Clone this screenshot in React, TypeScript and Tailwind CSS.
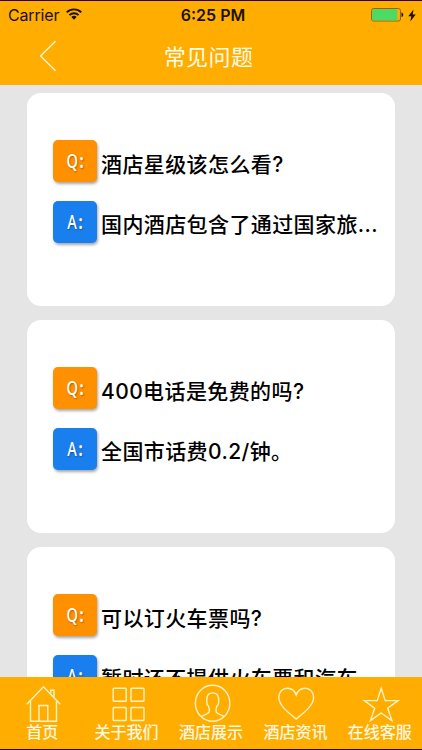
import React, { useState } from 'react';

type TabId = 'home' | 'about' | 'rooms' | 'news' | 'service';

interface Faq {
  question: string;
  answer: string;
}

const faqs: Faq[] = [
  { question: '酒店星级该怎么看?', answer: '国内酒店包含了通过国家旅...' },
  { question: '400电话是免费的吗?', answer: '全国市话费0.2/钟。' },
  { question: '可以订火车票吗?', answer: '暂时还不提供火车票和汽车' },
];

const HomeIcon = () => (
  <>
    <path d="M3.800 19.300 20.500 1.800l16.700 17.500" />
    <path d="M7.500 16v20.300h26V16" />
    <path d="M16 36.300V20.500h8.800v15.800" />
    <path d="M27.800 8.500V5.200h3.200v7" />
  </>
);

const GridIcon = () => (
  <>
    <rect x="5.200" y="3.300" width="13" height="13" rx="0.800" />
    <rect x="23" y="3.300" width="13" height="13" rx="0.800" />
    <rect x="5.200" y="22.500" width="13" height="13" rx="0.800" />
    <rect x="23" y="22.500" width="13" height="13" rx="0.800" />
  </>
);

const PersonIcon = () => (
  <>
    <ellipse cx="20.600" cy="18.200" rx="17.200" ry="18" />
    <path d="M9.300 31.700c2.500-2.200 6.900-2.400 7.900-4.700.6-1.800.1-4.200-.8-6.100-1.200-.7-1.700-1.900-1.600-3.700-.9-5.800 1.400-9.300 5.900-9.300s6.800 3.500 5.900 9.300c.1 1.800-.4 3-1.600 3.700-.9 1.900-1.400 4.300-.8 6.100 1 2.300 5.400 2.500 7.900 4.700" />
  </>
);

const HeartIcon = () => (
  <path d="M20.200 34C13.700 28.500 2.800 21 2.800 12.300 2.800 7 6.600 3.300 11.300 3.300c4 0 7.400 2.600 8.900 6.700 1.500-4.100 4.900-6.700 8.900-6.700 4.700 0 8.500 3.700 8.500 9 0 8.700-10.900 16.200-17.400 21.700Z" />
);

const StarIcon = () => (
  <path d="m20.200 3.300 4 12.300h12.900l-10.400 7.700 4.200 12.300-10.700-7.600-10.700 7.600 4.200-12.300-10.400-7.700h12.900Z" />
);

const tabs = [
  { id: 'home' as TabId, label: '首页', icon: HomeIcon },
  { id: 'about' as TabId, label: '关于我们', icon: GridIcon },
  { id: 'rooms' as TabId, label: '酒店展示', icon: PersonIcon },
  { id: 'news' as TabId, label: '酒店资讯', icon: HeartIcon },
  { id: 'service' as TabId, label: '在线客服', icon: StarIcon },
];

function StatusBar() {
  return (
    <div className="grid grid-cols-3 items-center h-7 pl-2 pr-1.5 text-[#1c1200]">
      <div className="flex items-center gap-[7px]">
        <span className="text-[16px] leading-7 tracking-[-0.15px]">Carrier</span>
        <svg className="w-4 h-3 -mt-0.5" viewBox="0 0 16 12" fill="none" stroke="currentColor" strokeWidth="1.900">
          <path d="M.7 4.400a10.300 10.300 0 0 1 14.600 0" />
          <path d="M3.400 7.100a6.500 6.500 0 0 1 9.200 0" />
          <path d="M8 11.800 5.300 9.100a3.800 3.800 0 0 1 5.400 0Z" fill="currentColor" stroke="none" />
        </svg>
      </div>
      <span className="pl-0.5 text-center text-[16px] leading-7 font-semibold">6:25 PM</span>
      <div className="flex items-center justify-end gap-[4px]">
        <svg className="w-[33px] h-[14px]" viewBox="0 0 33 14">
          <rect x="0.500" y="0.500" width="29" height="12.500" rx="2" fill="none" stroke="#8a6a10" />
          <rect x="1.200" y="1.200" width="25" height="11.200" rx="1" fill="#4cd964" />
          <path d="M30.500 4.500c2.300.7 2.300 3.800 0 4.500Z" fill="currentColor" />
        </svg>
        <svg className="w-[8px] h-[13px]" viewBox="0 0 8 13" fill="currentColor">
          <path d="M5.500.5.300 7.200h3L2.300 12.500 7.700 5.500h-3Z" />
        </svg>
      </div>
    </div>
  );
}

function Badge({ letter, color }: { letter: string; color: string }) {
  return (
    <div
      className={`w-[44px] h-[42px] shrink-0 rounded-[5px] flex items-center justify-center shadow-[1px_2px_3px_rgba(0,0,0,0.35)] ${color}`}
    >
      <span className="flex items-baseline gap-[2px] scale-x-[0.77] font-['Noto_Sans',sans-serif] text-[19px] leading-none font-medium text-white [text-shadow:1px_1px_2px_rgba(0,0,0,0.35)]">
        {letter}<b className="font-bold">:</b>
      </span>
    </div>
  );
}

function FaqCard({ faq }: { faq: Faq }) {
  return (
    <article className="h-[213px] shrink-0 rounded-[14px] bg-white pl-[26px] pt-[47px] flex flex-col gap-[19px]">
      <div className="flex h-[42px] gap-1">
        <Badge letter="Q" color="bg-[#ff9000]" />
        <p className="pt-[4px] text-[21px] leading-[42px] font-medium tracking-[0.4px] whitespace-nowrap">
          {faq.question}
        </p>
      </div>
      <div className="flex h-[42px] gap-1">
        <Badge letter="A" color="bg-[#1a7fee]" />
        <p className="pt-[3px] text-[21px] leading-[42px] font-medium tracking-[0.4px] whitespace-nowrap">
          {faq.answer}
        </p>
      </div>
    </article>
  );
}

function App() {
  const [activeTab, setActiveTab] = useState<TabId>('home');

  return (
    <div
      lang="zh-CN"
      className="w-[422px] h-[750px] flex flex-col overflow-hidden bg-[#e5e5e5] text-black font-['Inter','Noto_Sans_CJK_SC',sans-serif]"
    >
      {/* Header */}
      <header className="h-[85px] shrink-0 bg-[#ffad00] border-t border-[#2b0505]">
        <StatusBar />
        <div className="grid grid-cols-3 items-center h-[56px]">
          <button className="ml-[39px] w-[18px] h-[32px] -mt-[3px]" aria-label="返回">
            <svg className="w-[18px] h-[32px]" viewBox="0 0 18 32" fill="none" stroke="#fff8dc" strokeWidth="1.300">
              <path d="M16.500 1.300 1.500 16l15 14.700" />
            </svg>
          </button>
          <h1 className="pr-[5px] text-center text-[22px] leading-8 font-normal tracking-[0.4px] text-[#fffbe8] whitespace-nowrap">
            常见问题
          </h1>
        </div>
      </header>

      {/* FAQ list */}
      <main className="flex-1 min-h-0 overflow-hidden pl-[27px] pr-[27px] pt-2 flex flex-col gap-[14px]">
        {faqs.map((faq) => (
          <FaqCard key={faq.question} faq={faq} />
        ))}
      </main>

      {/* Tab bar */}
      <nav className="h-[73px] shrink-0 grid grid-cols-5 bg-[#ffad00] border-b border-[#2b0505]">
        {tabs.map((tab) => {
          const Icon = tab.icon;
          return (
            <button
              key={tab.id}
              onClick={() => setActiveTab(tab.id)}
              aria-current={activeTab === tab.id ? 'page' : undefined}
              className="flex flex-col items-center pt-[8px] text-[#fffbe8]"
            >
              <svg
                className="w-[38px] h-[37px] shrink-0 overflow-visible"
                viewBox="0 0 38 37"
                fill="none"
                stroke="#fff3c4"
                strokeWidth="1.400"
              >
                <Icon />
              </svg>
              <span className="text-[16px] leading-5 whitespace-nowrap [-webkit-text-stroke:0.2px_#fffbe8]">
                {tab.label}
              </span>
            </button>
          );
        })}
      </nav>
    </div>
  );
}

export default App;
